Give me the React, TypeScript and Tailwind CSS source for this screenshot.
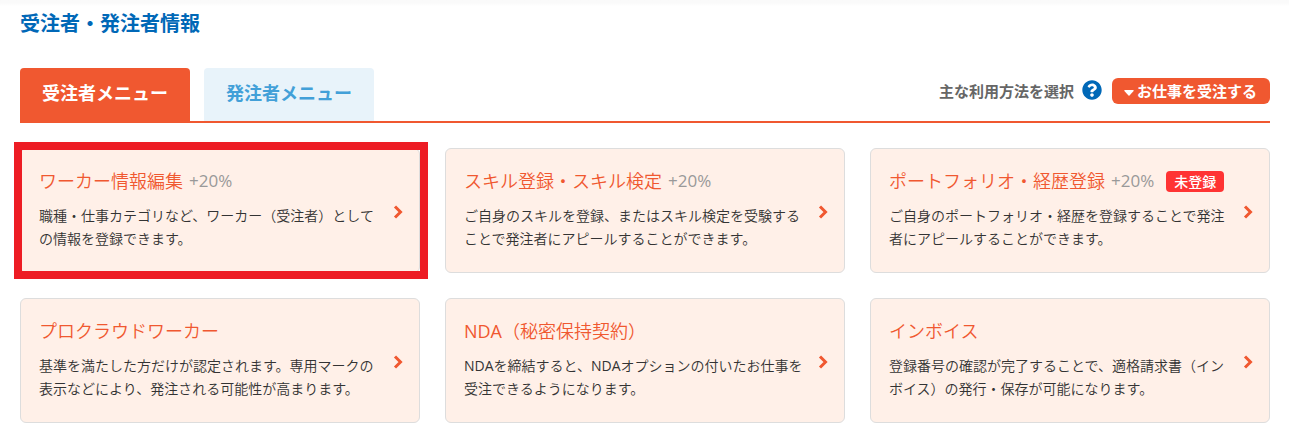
import { useState } from "react";
import { FaQuestionCircle } from "react-icons/fa";

type MenuCardProps = {
  title: string;
  description: string;
  bonus?: string;
  badge?: string;
  isHighlighted?: boolean;
};

const TABS = ["受注者メニュー", "発注者メニュー"];

const MENUS: MenuCardProps[] = [
  {
    title: "ワーカー情報編集",
    description:
      "職種・仕事カテゴリなど、ワーカー（受注者）としての情報を登録できます。",
    bonus: "+20%",
    isHighlighted: true,
  },
  {
    title: "スキル登録・スキル検定",
    description:
      "ご自身のスキルを登録、またはスキル検定を受験することで発注者にアピールすることができます。",
    bonus: "+20%",
  },
  {
    title: "ポートフォリオ・経歴登録",
    description:
      "ご自身のポートフォリオ・経歴を登録することで発注者にアピールすることができます。",
    bonus: "+20%",
    badge: "未登録",
  },
  {
    title: "プロクラウドワーカー",
    description:
      "基準を満たした方だけが認定されます。専用マークの表示などにより、発注される可能性が高まります。",
  },
  {
    title: "NDA（秘密保持契約）",
    description:
      "NDAを締結すると、NDAオプションの付いたお仕事を受注できるようになります。",
  },
  {
    title: "インボイス",
    description:
      "登録番号の確認が完了することで、適格請求書（インボイス）の発行・保存が可能になります。",
  },
];

function MenuCard({
  title,
  description,
  bonus,
  badge,
  isHighlighted = false,
}: MenuCardProps) {
  return (
    <a
      href="#"
      className="relative flex items-center justify-between rounded-md border border-[#dddddd] bg-[#fff0e8] pt-5 pb-[22px] pl-[18px] pr-4"
    >
      <div className="w-[343px]">
        <div className="flex h-6 items-center whitespace-nowrap">
          <h2 className="font-['Open_Sans','Noto_Sans_CJK_JP_DemiLight','Noto_Sans_CJK_JP',sans-serif] text-[18px] leading-6 text-[#f05830]">
            {title}
          </h2>
          {bonus && (
            <span className="ml-1.5 text-[17px] leading-6 text-[#999999]">
              {bonus}
            </span>
          )}
          {badge && (
            <span className="ml-3 rounded bg-[#ff3333] px-2 text-[14px] leading-[21px] font-medium text-white">
              {badge}
            </span>
          )}
        </div>
        <p className="mt-[11px] font-['Open_Sans','Noto_Sans_CJK_JP_DemiLight','Noto_Sans_CJK_JP',sans-serif] text-[14px] leading-[23px] text-[#333333]">
          {description}
        </p>
      </div>
      <svg
        viewBox="0 0 10 14"
        className="mt-1 h-3.5 w-2.5 shrink-0 fill-none stroke-[#f05830] stroke-3"
      >
        <path d="M2 1.5 7.5 7 2 12.5" />
      </svg>
      {isHighlighted && (
        <span className="pointer-events-none absolute -inset-[7px] -right-[9px] border-8 border-[#ed1c24]" />
      )}
    </a>
  );
}

function App() {
  const [activeTab, setActiveTab] = useState(TABS[0]);

  return (
    <main className="bg-white bg-linear-to-b from-[#fafafa] from-[3px] to-white to-[6px] pt-2 pr-[19px] pb-5 pl-5 font-['Open_Sans','Noto_Sans_CJK_JP',sans-serif]">
      <h1 className="text-[20px] leading-[31px] font-bold text-[#0068b7]">
        受注者・発注者情報
      </h1>

      {/* タブ */}
      <div className="mt-[29px] flex items-start justify-between border-b-2 border-[#f05830]">
        <div role="tablist" className="flex gap-3.5">
          {TABS.map((tab) => (
            <button
              key={tab}
              role="tab"
              aria-selected={tab === activeTab}
              onClick={() => setActiveTab(tab)}
              className={`h-[53px] rounded-t px-[22px] pb-1 text-[18px] leading-6 font-bold ${
                tab === activeTab
                  ? "bg-[#f05830] text-white"
                  : "bg-[#e8f3fa] text-[#42a0d8]"
              }`}
            >
              {tab}
            </button>
          ))}
        </div>

        {/* 利用方法 */}
        <div className="mt-2.5 flex items-center">
          <label
            htmlFor="usage"
            className="text-[15px] leading-6 font-bold text-[#666666]"
          >
            主な利用方法を選択
          </label>
          <button aria-label="ヘルプ" className="mr-2.5 mb-0.5 ml-2">
            <FaQuestionCircle className="size-5 text-[#0068b7]" />
          </button>
          <div className="relative">
            <select
              id="usage"
              className="block h-[26px] w-[158px] appearance-none rounded-md bg-[#f05830] pl-[25px] text-[15px] leading-[26px] font-bold text-white"
            >
              <option>お仕事を受注する</option>
              <option>お仕事を発注する</option>
            </select>
            <svg
              viewBox="0 0 10 6"
              className="pointer-events-none absolute top-3 left-3 h-1.5 w-2.5 fill-white"
            >
              <path d="M.8 0h8.4q.8.2.4 1L5.5 5.5q-.5.4-1 0L.4 1Q0 .2.8 0Z" />
            </svg>
          </div>
        </div>
      </div>

      {/* メニュー */}
      <div className="mt-[25px] grid grid-cols-3 gap-[25px]">
        {MENUS.map((menu) => (
          <MenuCard key={menu.title} {...menu} />
        ))}
      </div>
    </main>
  );
}

export default App;
